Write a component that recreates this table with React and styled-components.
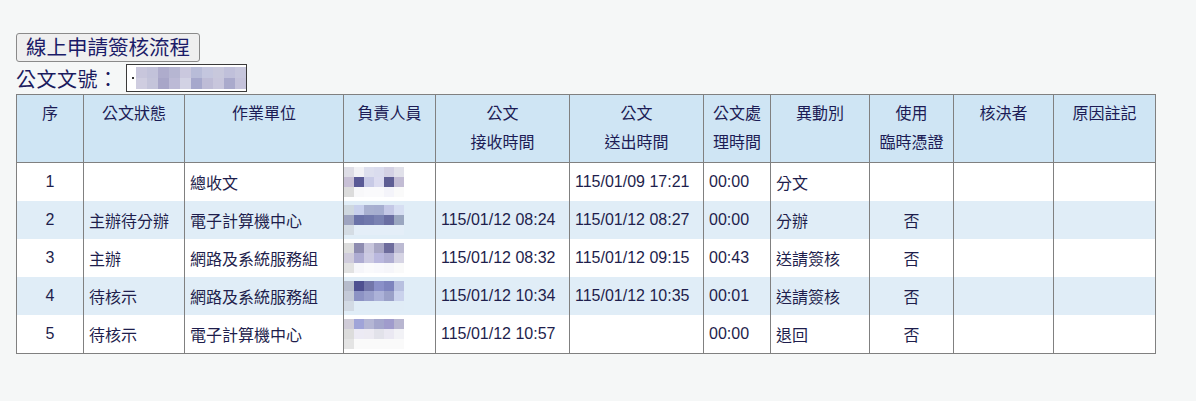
import React from "react";
import styled, { createGlobalStyle } from "styled-components";

const GlobalStyle = createGlobalStyle`
  html, body {
    margin: 0;
    padding: 0;
    background: #f5f7f7;
  }
  body {
    font-family: "Liberation Sans", "Noto Sans CJK TC", sans-serif;
    color: #1e1e4c;
  }
`;

const Page = styled.div`
  min-height: 401px;
  box-sizing: border-box;
  padding: 33px 0 0 16px;
  box-shadow: inset -3px 0 0 #ffffff;
`;

const FlowButton = styled.button`
  display: block;
  height: 29px;
  padding: 0 9px;
  font-family: "Liberation Sans", "Noto Sans CJK TC", sans-serif;
  font-size: 20.5px;
  line-height: 27px;
  color: #1b1b68;
  background: #efefef;
  border: 1px solid #8a8a8a;
  border-radius: 3px;
`;

const DocRow = styled.div`
  display: flex;
  align-items: center;
  gap: 7px;
  height: 32px;
`;

const DocLabel = styled.span`
  font-size: 20px;
  color: #1b1b5e;
  letter-spacing: 0.5px;
`;

const DocBox = styled.div`
  box-sizing: border-box;
  width: 121px;
  height: 28px;
  border: 1px solid #3a3a3a;
  background: #ffffff;
  display: flex;
  align-items: center;
  padding-left: 5px;
  gap: 1px;
`;

const Dot = styled.span`
  width: 2px;
  height: 2px;
  background: #333;
  margin-right: 1px;
`;

const TileGrid = styled.div`
  display: grid;
  grid-template-columns: repeat(${(p) => p.$cols}, ${(p) => p.$size}px);
  grid-auto-rows: ${(p) => p.$size}px;
`;

const Tile = styled.span`
  background: ${(p) => p.$c};
`;

const Table = styled.table`
  border-collapse: collapse;
  table-layout: fixed;
  width: 1139px;
  font-size: 16px;
  border: 1px solid #808080;
`;

const Th = styled.th`
  background: #cfe5f4;
  border: 1px solid #808080;
  font-weight: normal;
  vertical-align: top;
  height: 68px;
  padding: 4px 4px 0;
  line-height: 29px;
  color: #1c1c55;
  box-sizing: border-box;
`;

const Tr = styled.tr`
  background: ${(p) => (p.$alt ? "#e0edf7" : "#ffffff")};
`;

const Td = styled.td`
  height: 38px;
  padding: 0 ${(p) => (p.$tight ? 0 : 5)}px;
  border-left: 1px solid #808080;
  border-right: 1px solid #808080;
  text-align: ${(p) => (p.$center ? "center" : "left")};
  white-space: nowrap;
  overflow: visible;
  color: #1e1e4c;
`;

const personTiles = [
  [
    "#dedde6", "#f2f2f6", "#dddfee", "#dadcee", "#d3d1e4", "#e1e1ea",
    "#c8c0d6", "#5a5a96", "#c8cae6", "#dcdcf0", "#5e5e94", "#c2bcd4",
    "#dcdcdc", "#f8f8fa", "#fafafc", "#fafafc", "#f4f4fa", "#fafafa",
  ],
  [
    "#cfd8e0", "#c8d0ec", "#a8b0d0", "#a6aed0", "#c4c8e6", "#d6def2",
    "#9ea4c0", "#6a72a8", "#7078ac", "#7a82b2", "#6a6ea2", "#9aa6c0",
    "#d4dce4", "#e4eef8", "#e4eef8", "#e4eef8", "#e4eef8", "#e4eef8",
  ],
  [
    "#dcdcdc", "#8e8cb0", "#c8c6dc", "#a8a6c4", "#6e6c9c", "#bcbad2",
    "#d0ccdc", "#aeacd2", "#cccae2", "#bab8de", "#b0aed2", "#d6d4e4",
    "#e2e2e2", "#f6f6fa", "#fafafc", "#f8f8fc", "#f6f6fa", "#fafafa",
  ],
  [
    "#b6bccc", "#4e5090", "#7276aa", "#8a90c8", "#7e84be", "#b8c0e0",
    "#c4cad8", "#8c92c4", "#9aa0cc", "#acb2d8", "#9aa0c8", "#cad2ec",
    "#d2dae4", "#e0ecf6", "#e0ecf6", "#e0ecf6", "#e0ecf6", "#e0ecf6",
  ],
  [
    "#d0ccd8", "#a0a4d8", "#b4b6d4", "#a4a6cc", "#a09ccc", "#b8b6d0",
    "#dcdcdc", "#eceaf4", "#eceaf2", "#e2e2ea", "#eae8f2", "#f2f2f6",
    "#e4e4e4", "#fafafa", "#fafafa", "#fafafa", "#fafafa", "#fafafa",
  ],
];

const docTiles = [
  "#c8c6dc", "#c2c2da", "#aeaccc", "#b6b6d2", "#cac8de", "#b8bcd8", "#c4c6de", "#c8c8dc", "#c0c0da", "#c6c6dc",
  "#cfcde0", "#c4c4da", "#a8a6c8", "#bcbad6", "#d2d2e4", "#a6a8cc", "#bebcd6", "#c8c6dc", "#aaaacc", "#c4c2da",
];

const headers = [
  ["序"],
  ["公文狀態"],
  ["作業單位"],
  ["負責人員"],
  ["公文", "接收時間"],
  ["公文", "送出時間"],
  ["公文處", "理時間"],
  ["異動別"],
  ["使用", "臨時憑證"],
  ["核決者"],
  ["原因註記"],
];

const widths = [67, 101, 159, 92, 134, 134, 67, 99, 84, 100, 102];

const rows = [
  { no: 1, status: "", unit: "總收文", recv: "", sent: "115/01/09 17:21", spent: "00:00", kind: "分文", temp: "" },
  { no: 2, status: "主辦待分辦", unit: "電子計算機中心", recv: "115/01/12 08:24", sent: "115/01/12 08:27", spent: "00:00", kind: "分辦", temp: "否" },
  { no: 3, status: "主辦", unit: "網路及系統服務組", recv: "115/01/12 08:32", sent: "115/01/12 09:15", spent: "00:43", kind: "送請簽核", temp: "否" },
  { no: 4, status: "待核示", unit: "網路及系統服務組", recv: "115/01/12 10:34", sent: "115/01/12 10:35", spent: "00:01", kind: "送請簽核", temp: "否" },
  { no: 5, status: "待核示", unit: "電子計算機中心", recv: "115/01/12 10:57", sent: "", spent: "00:00", kind: "退回", temp: "否" },
];

const Mosaic = ({ tiles, cols, size }) => (
  <TileGrid $cols={cols} $size={size}>
    {tiles.map((c, i) => (
      <Tile key={i} $c={c} />
    ))}
  </TileGrid>
);

const App = () => {
  return (
    <Page>
      <GlobalStyle />
      <FlowButton>線上申請簽核流程</FlowButton>
      <DocRow>
        <DocLabel>公文文號：</DocLabel>
        <DocBox>
          <Dot />
          <Mosaic tiles={docTiles} cols={10} size={11} />
        </DocBox>
      </DocRow>
      <Table>
        <colgroup>
          {widths.map((w, i) => (
            <col key={i} style={{ width: w }} />
          ))}
        </colgroup>
        <thead>
          <tr>
            {headers.map((h, i) => (
              <Th key={i}>
                {h.map((line, j) => (
                  <div key={j}>{line}</div>
                ))}
              </Th>
            ))}
          </tr>
        </thead>
        <tbody>
          {rows.map((r, i) => (
            <Tr key={r.no} $alt={i % 2 === 1}>
              <Td $center>{r.no}</Td>
              <Td>{r.status}</Td>
              <Td>{r.unit}</Td>
              <Td $tight>
                <Mosaic tiles={personTiles[i]} cols={6} size={10} />
              </Td>
              <Td>{r.recv}</Td>
              <Td>{r.sent}</Td>
              <Td>{r.spent}</Td>
              <Td>{r.kind}</Td>
              <Td $center>{r.temp}</Td>
              <Td />
              <Td />
            </Tr>
          ))}
        </tbody>
      </Table>
    </Page>
  );
};

export default App;
